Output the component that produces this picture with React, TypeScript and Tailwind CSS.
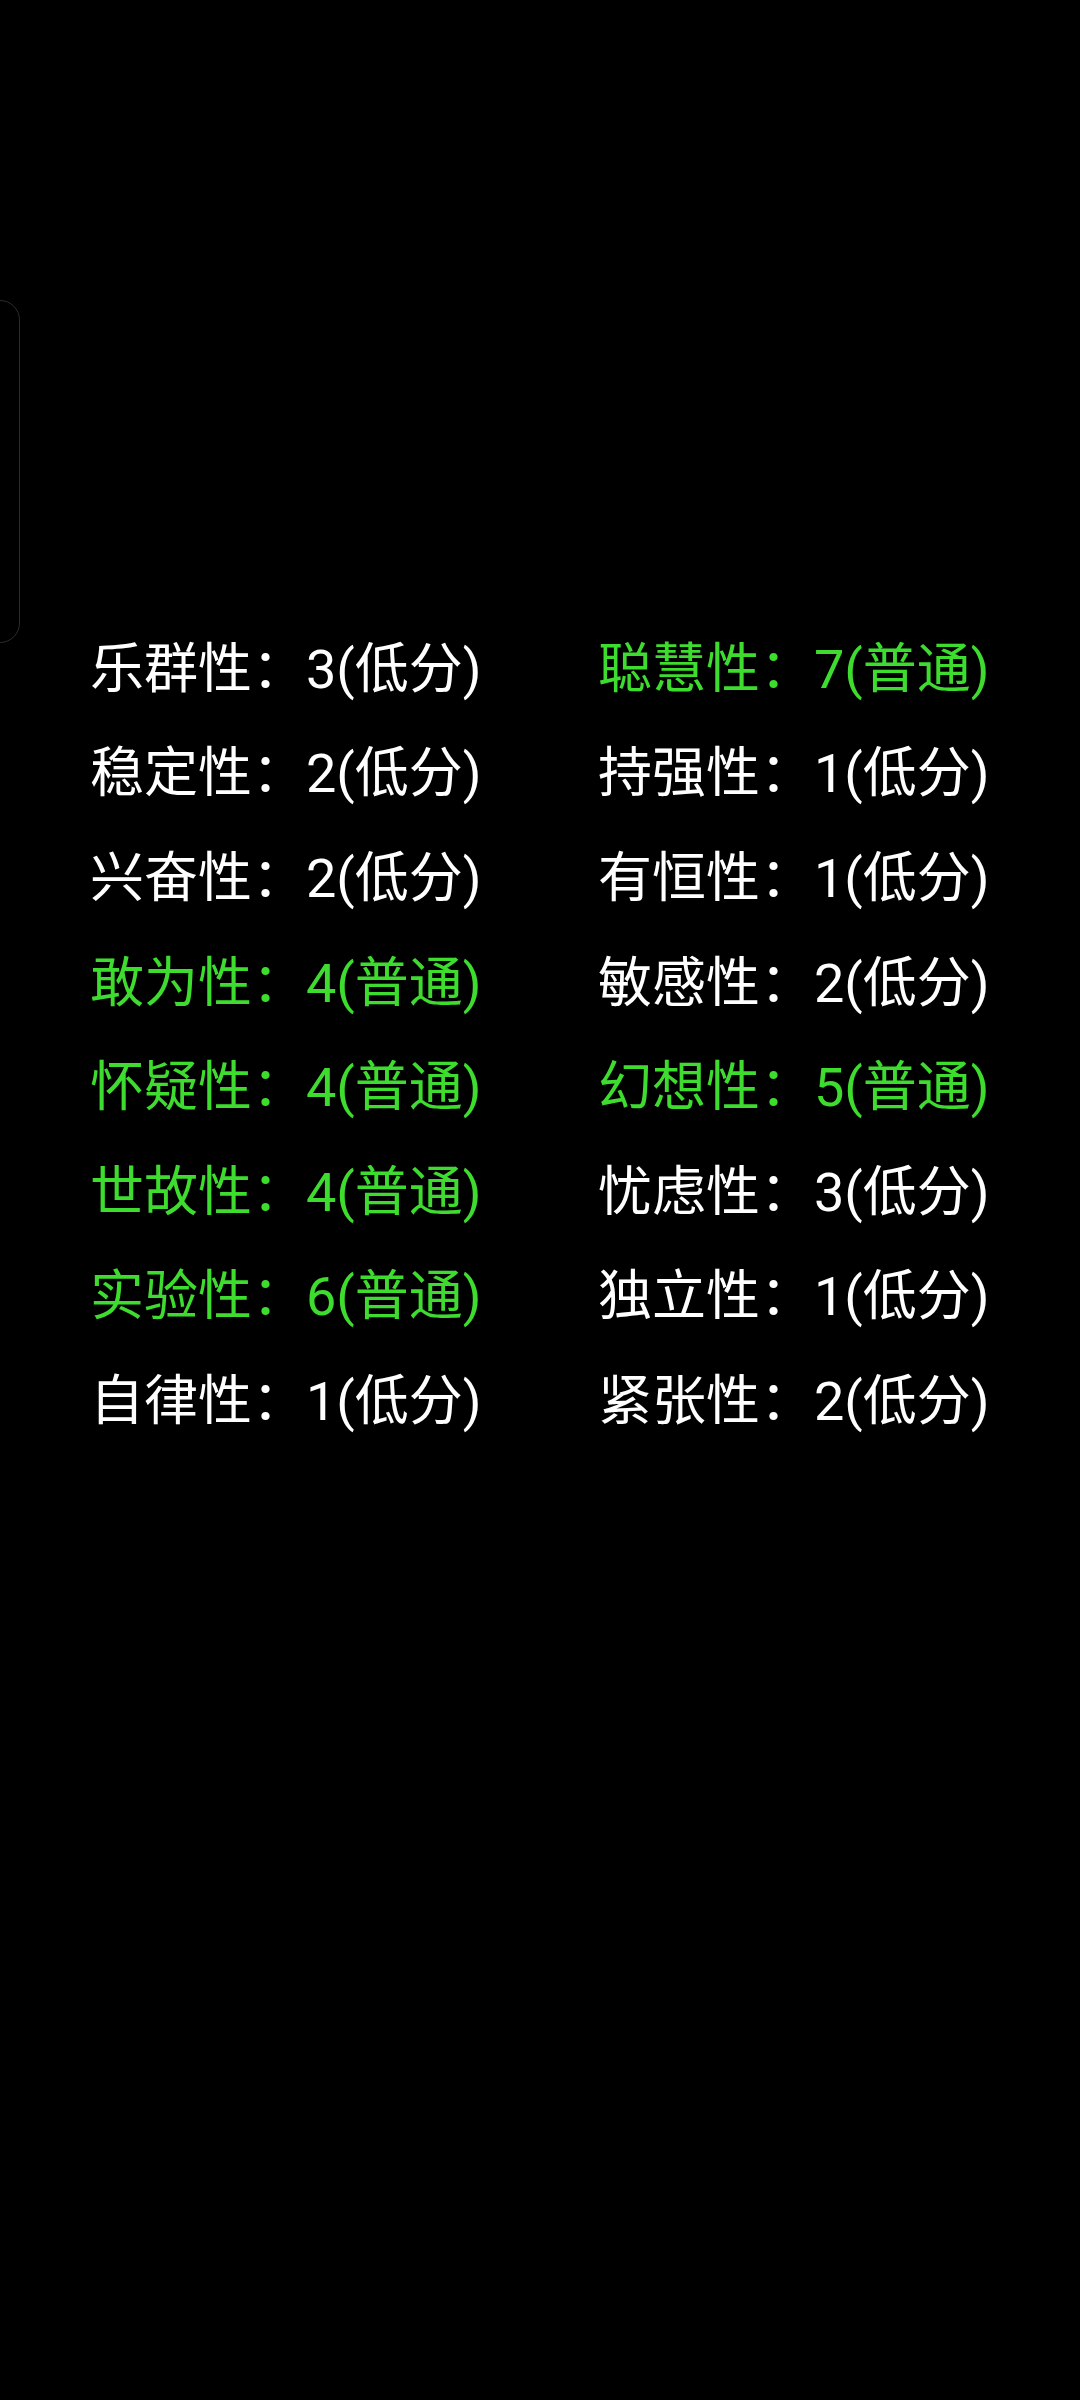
import React from "react";

type Item = { label: string; score: number; level: string; hi: boolean };

const left: Item[] = [
  { label: "乐群性", score: 3, level: "低分", hi: false },
  { label: "稳定性", score: 2, level: "低分", hi: false },
  { label: "兴奋性", score: 2, level: "低分", hi: false },
  { label: "敢为性", score: 4, level: "普通", hi: true },
  { label: "怀疑性", score: 4, level: "普通", hi: true },
  { label: "世故性", score: 4, level: "普通", hi: true },
  { label: "实验性", score: 6, level: "普通", hi: true },
  { label: "自律性", score: 1, level: "低分", hi: false },
];

const right: Item[] = [
  { label: "聪慧性", score: 7, level: "普通", hi: true },
  { label: "持强性", score: 1, level: "低分", hi: false },
  { label: "有恒性", score: 1, level: "低分", hi: false },
  { label: "敏感性", score: 2, level: "低分", hi: false },
  { label: "幻想性", score: 5, level: "普通", hi: true },
  { label: "忧虑性", score: 3, level: "低分", hi: false },
  { label: "独立性", score: 1, level: "低分", hi: false },
  { label: "紧张性", score: 2, level: "低分", hi: false },
];

function Cell({ item }: { item: Item }) {
  return (
    <div
      className={
        "h-[104.6px] flex items-center whitespace-nowrap text-[54px] " +
        (item.hi ? "text-[#3ddc2e]" : "text-white")
      }
    >
      {item.label}：{item.score}({item.level})
    </div>
  );
}

export default function App() {
  return (
    <div
      className="relative w-[1080px] h-[2400px] bg-black overflow-hidden"
      style={{ fontFamily: 'Roboto, "Noto Sans CJK SC", sans-serif' }}
    >
      <div className="absolute left-[-20px] top-[300px] w-[40px] h-[343px] rounded-[20px] border border-[#2c2c2c]" />
      <div className="pt-[617px] pl-[90px] grid grid-cols-[508px_1fr]">
        <div className="flex flex-col">
          {left.map((it) => (
            <Cell key={it.label} item={it} />
          ))}
        </div>
        <div className="flex flex-col">
          {right.map((it) => (
            <Cell key={it.label} item={it} />
          ))}
        </div>
      </div>
    </div>
  );
}
